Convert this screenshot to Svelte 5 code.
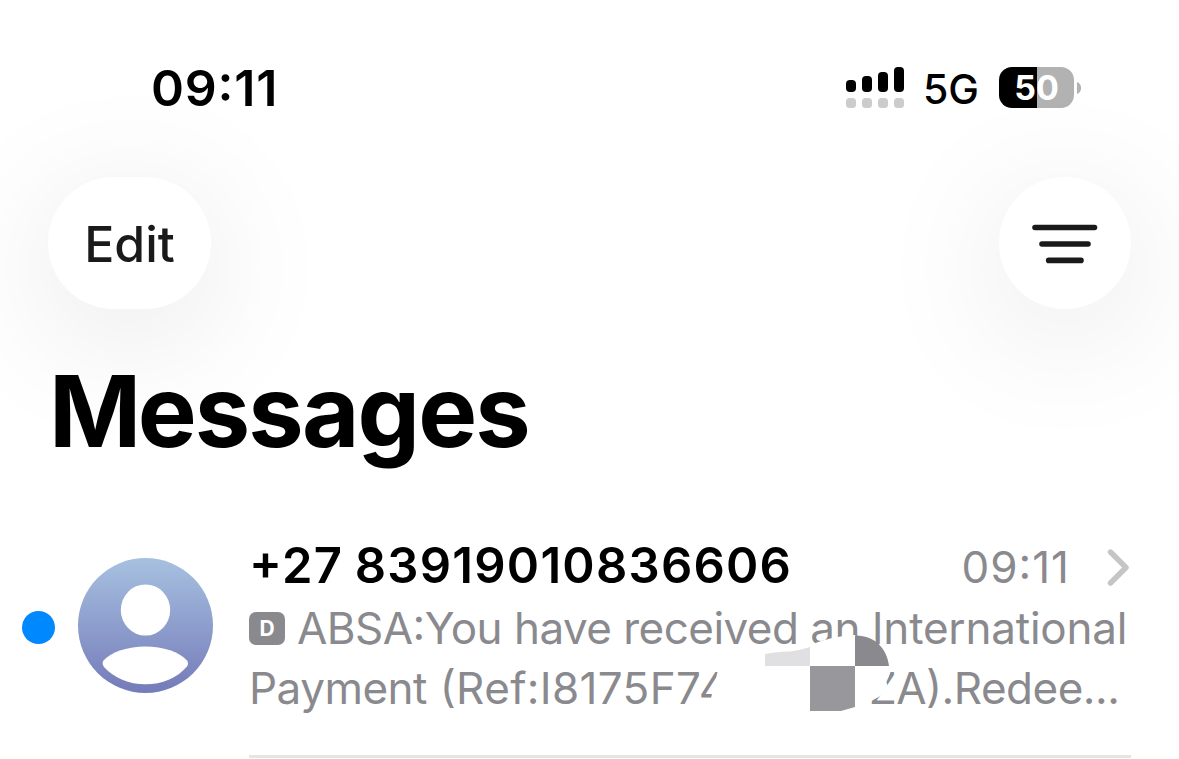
<script>
  const bars = [12, 16, 20, 25];
</script>

<main class="screen">
  <header class="status">
    <span class="clock">09:11</span>
    <div class="indicators">
      <div class="signal">
        <div class="bars">
          {#each bars as h}<i style="height:{h}px"></i>{/each}
        </div>
        <div class="dots">
          {#each bars as _}<i></i>{/each}
        </div>
      </div>
      <span class="network">5G</span>
      <div class="battery">
        <div class="level">50</div>
        <svg class="cap" width="5" height="14" viewBox="0 0 5 14"><path d="M0 1C5.4 2.600 5.400 11.400 0 13Z" fill="#b2b2b2" /></svg>
      </div>
    </div>
  </header>

  <nav class="toolbar">
    <button class="edit">Edit</button>
    <button class="filter" aria-label="Filter">
      <svg width="66" height="40" viewBox="0 0 66 40" fill="none" stroke="#1a1a1a" stroke-width="5.600" stroke-linecap="round">
        <path d="M3 3.500H62.500M10 20H56M16.700 36.400H49" />
      </svg>
    </button>
  </nav>

  <h1>Messages</h1>

  <section class="row">
    <span class="unread"></span>
    <svg class="avatar" width="136" height="136" viewBox="0 0 136 136">
      <defs>
        <linearGradient id="sky" x1="0" y1="0" x2="0" y2="1">
          <stop offset="0" stop-color="#a7c1e0" />
          <stop offset="1" stop-color="#747bb9" />
        </linearGradient>
      </defs>
      <circle cx="67.500" cy="67.500" r="67.500" fill="url(#sky)" />
      <ellipse cx="67.500" cy="52" rx="24.700" ry="25.600" fill="#fff" />
      <path d="M25.500 102.500C33 94 50 88.500 67.500 88.500S101.500 94 109 102.500Q111 105.500 109 108.500C99 120 84 126.300 67.500 126.300S36 120 26 109Q23.500 105.500 25.500 102.500Z" fill="#fff" />
    </svg>
    <div class="body">
      <div class="top">
        <span class="sender">+27 83919010836606</span>
        <span class="meta">
          <span class="time">09:11</span>
          <svg width="24" height="40" viewBox="0 0 24 40" fill="none" stroke="#c5c5c7" stroke-width="5.400" stroke-linecap="round" stroke-linejoin="round"><path d="M3.500 4L19 19.500L3.500 35" /></svg>
        </span>
      </div>
      <div class="preview">
        <div class="line"><span class="tag">D</span><span class="text t1">ABSA:You have received an <span class="wide">International</span></span></div>
        <div class="line"><span class="text t2"><span class="tight">Payment</span> (Ref:I8175F74</span><span class="text t3">ZA).Redee...</span></div>
        <svg class="cover" width="200" height="100" viewBox="700 625 200 100">
          <path d="M718 670L711 698V715H867L869 702Q878 698 882 691Q886 684 891 671L889 666L855 635Q832 636 810 645V665H765V670Z" fill="#fff" />
          <path d="M870 701Q889 694 887 683L878 676L866 690Z" fill="#fff" />
          <path d="M765 654Q780 651 790 651.500Q801 650 810 647V666H765Z" fill="#e0e0e2" />
          <path d="M855 635.500C875 635 887 649 889 666H855Z" fill="#8a8a8e" />
          <path d="M810 666H855V707L841 711H810Z" fill="#98989c" />
        </svg>
      </div>
      <div class="rule"></div>
    </div>
  </section>
</main>

<style>
  :global(body) { margin: 0; background: #fff; overflow: hidden; }
  .screen {
    width: 1179px; height: 759px; box-sizing: border-box; overflow: hidden;
    display: flex; flex-direction: column; background: #fff; color: #000;
    font-family: Inter, "Liberation Sans", sans-serif; font-feature-settings: "calt" 1;
    white-space: nowrap;
  }
  .status { height: 177px; flex: none; display: flex; justify-content: space-between; box-sizing: border-box; padding: 58px 97px 0 151px; }
  .clock { font-size: 50px; line-height: 60px; font-weight: 600; letter-spacing: 0.800px; }
  .indicators { display: flex; align-items: flex-start; height: 60px; }
  .signal { width: 58px; padding-top: 9px; margin-right: 19px; }
  .bars, .dots { display: flex; gap: 6px; align-items: flex-end; }
  .bars { height: 25px; margin-bottom: 6px; }
  .bars i { width: 10px; border-radius: 4px; background: #000; }
  .dots i { width: 10px; height: 10px; border-radius: 3.500px; background: #ccc; }
  .network { width: 55px; font-size: 41px; line-height: 60px; font-weight: 450; padding-top: 1px; }
  .battery { display: flex; align-items: center; gap: 3px; margin-left: 21px; padding-top: 9px; }
  .level {
    width: 75px; height: 41px; border-radius: 13px; text-align: center; color: #fff;
    background: linear-gradient(90deg, #000 0 38px, #b2b2b2 38px);
    font-size: 34px; font-weight: 650; line-height: 42px;
  }
  .cap { display: block; }
  .toolbar { height: 132px; flex: none; display: flex; justify-content: space-between; padding: 0 48px; }
  button { border: 0; padding: 2px 0 0; background: #fff; font-family: inherit; color: #1a1a1a; box-shadow: 0 24px 136px rgba(0, 0, 0, 0.105); }
  .edit { width: 163px; height: 132px; border-radius: 66px; font-size: 50px; font-weight: 500; }
  .filter { width: 132px; height: 132px; border-radius: 50%; display: grid; place-items: center; }
  .filter svg { display: block; }
  h1 { position: relative; margin: 42px 0 0 49px; height: 120px; font-size: 99px; line-height: 120px; font-weight: 700; letter-spacing: -1.900px; }
  h1::first-letter { letter-spacing: -3.500px; }
  .row { display: flex; margin-top: 64px; padding-left: 22px; }
  .unread { width: 33px; height: 33px; border-radius: 50%; background: #0088ff; margin: 76px 23px 0 0; flex: none; }
  .avatar { display: block; margin-top: 23px; flex: none; }
  .body { margin-left: 35px; width: 882px; }
  .top { height: 65px; display: flex; justify-content: space-between; }
  .sender { font-size: 49px; line-height: 61px; font-weight: 600; letter-spacing: 1.230px; word-spacing: -2px; }
  .meta { display: flex; align-items: center; height: 65px; gap: 37px; color: #8a8a8e; }
  .time { font-size: 44px; line-height: 65px; letter-spacing: 1px; }
  .preview { position: relative; color: #8a8a8e; font-size: 44px; }
  .line { height: 60px; line-height: 56px; display: flex; align-items: center; }
  .text { padding-bottom: 4px; }
  .tag { flex: none; width: 36px; height: 33px; margin: 0 12px 4px 0; border-radius: 7px; background: #8a8a8e; color: #fff; font-size: 21px; line-height: 34px; text-align: center; font-weight: 700; }
  .t1 { letter-spacing: -0.530px; }
  .wide { letter-spacing: -0.200px; }
  .t2 { width: 620px; flex: none; letter-spacing: 0.350px; }
  .tight { letter-spacing: -0.500px; }
  .t3 { letter-spacing: -0.500px; }
  .cover { position: absolute; left: 451px; top: 25px; }
  .rule { height: 3px; margin-top: 35px; background: #e5e5e6; }
</style>
